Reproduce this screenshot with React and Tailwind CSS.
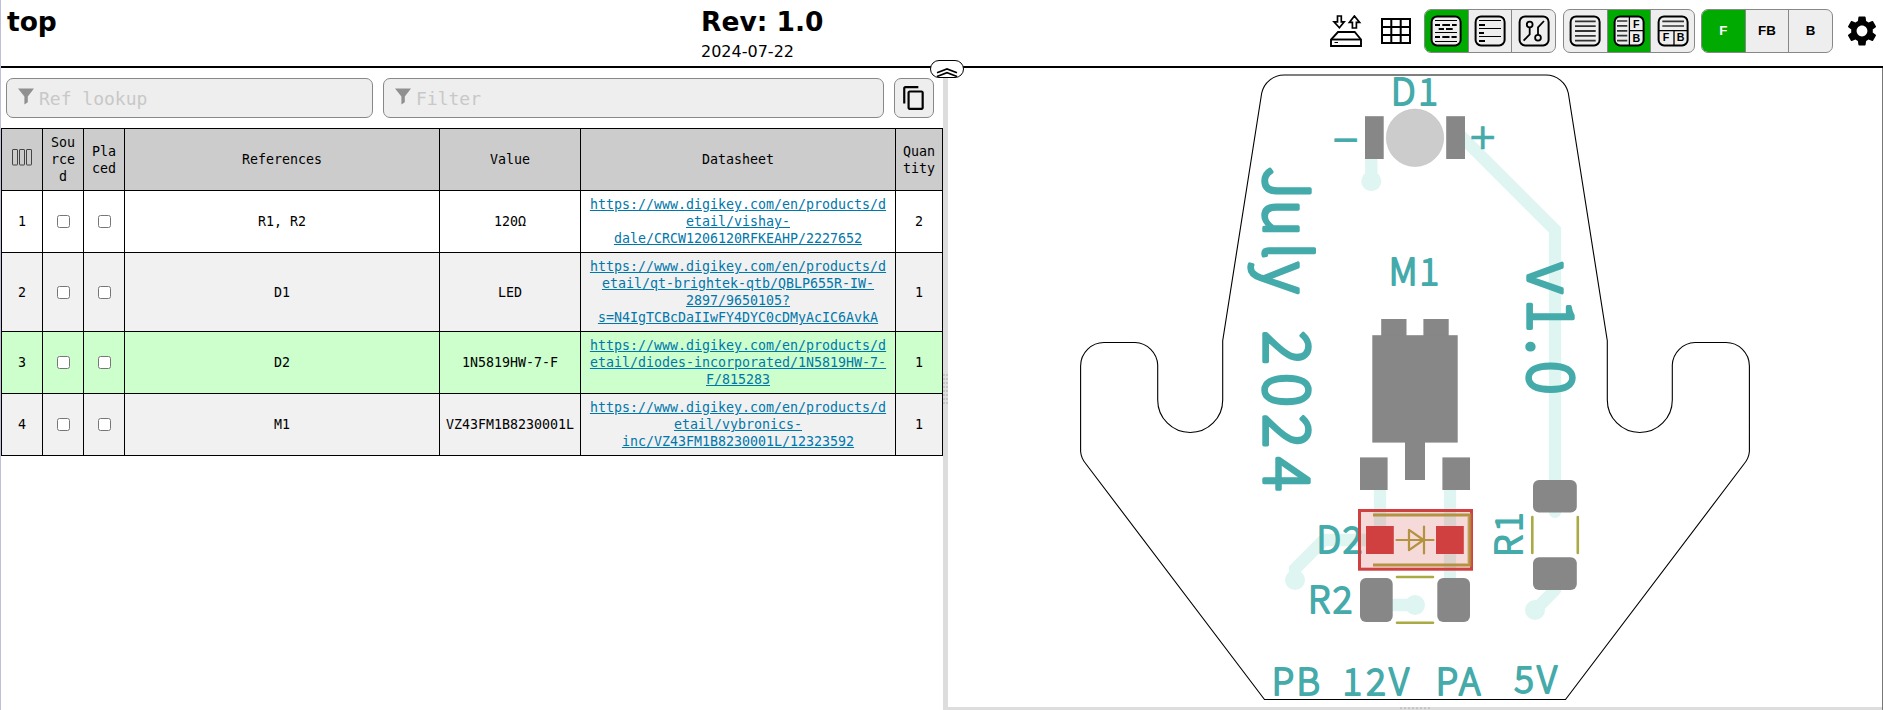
import React from "react";
import { MdSettings, MdOutlineContentCopy } from "react-icons/md";

const rows = [
  { n: 1, refs: "R1, R2", value: "120Ω", qty: 2, bg: "bg-white", link: ["https://www.digikey.com/en/products/d", "etail/vishay-", "dale/CRCW1206120RFKEAHP/2227652"] },
  { n: 2, refs: "D1", value: "LED", qty: 1, bg: "bg-[#f1f1f1]", link: ["https://www.digikey.com/en/products/d", "etail/qt-brightek-qtb/QBLP655R-IW-", "2897/9650105?", "s=N4IgTCBcDaIIwFY4DYC0cDMyAcIC6AvkA"] },
  { n: 3, refs: "D2", value: "1N5819HW-7-F", qty: 1, bg: "bg-[#ccffcc]", link: ["https://www.digikey.com/en/products/d", "etail/diodes-incorporated/1N5819HW-7-", "F/815283"] },
  { n: 4, refs: "M1", value: "VZ43FM1B8230001L", qty: 1, bg: "bg-[#f1f1f1]", link: ["https://www.digikey.com/en/products/d", "etail/vybronics-", "inc/VZ43FM1B8230001L/12323592"] },
];

const Tile = ({ children }) => (
  <svg width="32" height="32" viewBox="0 0 32 32" fill="none" stroke="#000">
    <rect x="1.6" y="1.4" width="29" height="29" rx="5.5" strokeWidth="2" fill="#eee" />
    {children}
  </svg>
);

const letter = { fontFamily: '"Liberation Sans", sans-serif', fontWeight: 700, fontSize: 10.7, textAnchor: "middle", fill: "#000", stroke: "none" };

const LayersIcon = () => (
  <Tile>
    <path d="M5 5.5H27M5 17.5H27M5 26.5H27" strokeWidth="1" />
    <path d="M5 10H10M12.3 10H20M22 10H26.7M8.7 14H14M16 14H22.7M5 22H10M12.3 22H19.5M21.5 22H26.7" strokeWidth="1.8" />
  </Tile>
);
const GroupIcon = () => (
  <Tile>
    <path d="M5 5.5H27M5 13.5H27M5 21.5H27" strokeWidth="1" />
    <path d="M5 10H11M5 18H10M5 26H11" strokeWidth="1.8" />
  </Tile>
);
const NetIcon = () => (
  <Tile>
    <g strokeWidth="1.8">
      <circle cx="11.7" cy="9.5" r="2.9" />
      <path d="M11.7 12.4V19.3L5.6 25.6" />
      <circle cx="20" cy="22.7" r="2.9" />
      <path d="M20 19.8V12.3L26 6" />
    </g>
  </Tile>
);
const ListIcon = () => (
  <Tile>
    <path d="M6 6.4H26.7M6 11.2H26.7M6 16H26.7M6 20.8H26.7M6 25.6H26.7" stroke="#333" strokeWidth="1.8" />
  </Tile>
);
const LeftRightIcon = () => (
  <Tile>
    <path d="M4 6H14.3M4 10.9H14.3M4 15.8H14.3M4 20.7H14.3M4 25.6H14.3" stroke="#333" strokeWidth="1.7" />
    <path d="M16.4 1.5V30.5M16.4 15.7H30.5" strokeWidth="1.3" />
    <text x="23.3" y="12.6" {...letter}>F</text>
    <text x="23.3" y="26.7" {...letter}>B</text>
  </Tile>
);
const TopBottomIcon = () => (
  <Tile>
    <path d="M5.3 6.3H27M5.3 11H27" stroke="#333" strokeWidth="1.7" />
    <path d="M1.5 15.6H30.5M17 15.6V30.5" strokeWidth="1.3" />
    <text x="9" y="26.4" {...letter}>F</text>
    <text x="23.6" y="26.4" {...letter}>B</text>
  </Tile>
);

function ButtonGroup({ items }) {
  return (
    <div className="flex h-[44px] w-[132px] overflow-hidden rounded-[7px] border border-[#888] bg-[#eee]">
      {items.map((it, i) => (
        <button
          key={i}
          className={
            "flex h-full flex-1 items-center justify-center font-['Liberation_Sans',sans-serif] text-[13.33px] font-bold " +
            (i > 0 ? "border-l border-[#888] " : "") +
            (it.on ? "bg-[#00aa00] text-white" : "text-black")
          }
        >
          {it.body}
        </button>
      ))}
    </div>
  );
}

const SaveIcon = () => (
  <svg width="32" height="32" viewBox="0 0 32 32" fill="none" stroke="#000" strokeWidth="1.9">
    <path d="M7.5 1H11.3V6.8H14.2L9.4 12.8L4 6.8H7.5Z" strokeWidth="1.7" />
    <path d="M22.4 13V7.4H19.4L24.4 1L29.6 7.4H26.4V13Z" strokeWidth="1.7" />
    <path d="M8 17H24.7L31 24.5V31H1V24.5Z" />
    <path d="M1 24.5H31" />
    <path d="M4.5 27.5H8" strokeWidth="1" />
  </svg>
);

const GridIcon = () => (
  <svg width="30" height="26" viewBox="0 0 30 26" fill="none" stroke="#000" strokeWidth="2">
    <path d="M1 1H29V25H1ZM1 9H29M1 17H29M10.3 1V25M19.7 1V25" />
  </svg>
);

function Search({ placeholder, width }) {
  return (
    <label className={"flex h-10 items-center rounded-[7px] border border-[#888] bg-[#eee] pl-[11px] " + width}>
      <svg width="16" height="17" viewBox="0 0 16 17" className="mb-[3px] shrink-0">
        <path d="M0 .5H16L9.8 8.6V14.2L6.4 16.5V8.6Z" fill="#909090" />
      </svg>
      <input
        placeholder={placeholder}
        className="ml-[5px] w-full bg-transparent font-['DejaVu_Sans_Mono',monospace] text-[18px] text-black outline-none placeholder:text-[#c8c8c8]"
      />
    </label>
  );
}

const cell = "border border-black px-[5px] py-[5px] text-center align-middle font-normal";

function BomTable() {
  return (
    <table className="w-[942px] table-fixed border-collapse font-['DejaVu_Sans_Mono',monospace] text-[13.3px] leading-[17px]">
      <colgroup>
        <col className="w-[41px]" />
        <col className="w-[41px]" />
        <col className="w-[41px]" />
        <col className="w-[315px]" />
        <col className="w-[141px]" />
        <col className="w-[315px]" />
        <col className="w-[47px]" />
      </colgroup>
      <thead className="bg-[#cccccc]">
        <tr className="h-[62px]">
          <th className={cell}>
            <svg width="21" height="17" viewBox="0 0 21 17" fill="none" stroke="#444" className="mx-auto -mt-1">
              <rect x=".5" y=".5" width="5" height="15.5" rx=".5" />
              <rect x="7.5" y=".5" width="5" height="15.5" rx=".5" />
              <rect x="14.5" y=".5" width="5" height="15.5" rx=".5" />
            </svg>
          </th>
          <th className={cell}>Sou<br />rce<br />d</th>
          <th className={cell}>Pla<br />ced</th>
          <th className={cell}>References</th>
          <th className={cell}>Value</th>
          <th className={cell}>Datasheet</th>
          <th className={cell}>Quan<br />tity</th>
        </tr>
      </thead>
      <tbody>
        {rows.map((r) => (
          <tr key={r.n} className={r.bg}>
            <td className={cell}>{r.n}</td>
            <td className={cell}><input type="checkbox" className="mx-auto block size-[13px]" /></td>
            <td className={cell}><input type="checkbox" className="mx-auto block size-[13px]" /></td>
            <td className={cell}>{r.refs}</td>
            <td className={cell + " whitespace-nowrap"}>{r.value}</td>
            <td className={cell + " whitespace-nowrap"}>
              <a href="#" className="text-[#0077aa] underline">
                {r.link.map((l, i) => (
                  <React.Fragment key={i}>{i > 0 && <br />}{l}</React.Fragment>
                ))}
              </a>
            </td>
            <td className={cell}>{r.qty}</td>
          </tr>
        ))}
      </tbody>
    </table>
  );
}

const silk = { fontFamily: '"Noto Sans CJK JP", "DejaVu Sans", sans-serif', fontWeight: 300, textAnchor: "middle", fill: "#44aaaa", stroke: "#44aaaa", strokeWidth: 1.9, strokeLinejoin: "round" };

const OUTLINE =
  "M1284 75H1546A23 23 0 0 1 1568.3 93L1607.3 340.7V400A32.5 32.5 0 0 0 1672.3 400V365A23.5 23.5 0 0 1 1695 342.5H1725A23.5 23.5 0 0 1 1749.4 366V451.5A22 22 0 0 1 1744 464L1565.5 699.5H1264.5L1086 464A22 22 0 0 1 1080.6 451.5V366A23.5 23.5 0 0 1 1105 342.5H1135A23.5 23.5 0 0 1 1157.7 365V400A32.5 32.5 0 0 0 1222.7 400V340.7L1261.7 93A23 23 0 0 1 1284 75Z";

function Board() {
  return (
    <svg width="933" height="639" viewBox="948 68 933 639" className="block overflow-visible">
      <g fill="none" stroke="#def5f1" strokeWidth="12.3" strokeLinecap="round">
        <path d="M1371.3 150V181M1456 131L1555 230V512M1555 590L1535 610M1380 480V540H1324L1295 569V580M1450 480V600M1380 605H1415" />
      </g>
      <g fill="#def5f1">
        <circle cx="1371.3" cy="181.3" r="10" />
        <circle cx="1535" cy="610" r="10" />
        <circle cx="1295" cy="580" r="10" />
        <circle cx="1415" cy="605" r="10" />
      </g>
      <path d={OUTLINE} fill="none" stroke="#000" strokeWidth="1.1" />
      <g fill="#878787">
        <rect x="1365" y="116.2" width="18.7" height="42.8" />
        <rect x="1446.2" y="116.2" width="18.8" height="42.8" />
        <rect x="1381.2" y="319" width="25.3" height="17" />
        <rect x="1423.4" y="319" width="25.3" height="17" />
        <rect x="1372.3" y="335.2" width="85.4" height="107.4" />
        <rect x="1405" y="442" width="20" height="38" />
        <rect x="1360" y="457.4" width="27.6" height="32.6" />
        <rect x="1442.4" y="457.4" width="27.6" height="32.6" />
        <rect x="1360" y="578" width="32.7" height="44" rx="6" />
        <rect x="1437.3" y="578" width="32.7" height="44" rx="6" />
        <rect x="1533" y="480" width="43.8" height="32.6" rx="6" />
        <rect x="1533" y="557.3" width="43.8" height="32.7" rx="6" />
      </g>
      <circle cx="1415" cy="137.8" r="28.7" fill="#ccc" stroke="#bbb" strokeWidth=".5" />
      <g stroke="#aaaa44" strokeWidth="2.6" strokeLinecap="round">
        <path d="M1397 577H1433M1397 622.8H1433M1532.3 517V553M1577.8 517V553" />
      </g>
      <g {...silk} fontSize="36.5">
        <text x="1403.3 1428" y="104.9">D1</text>
        <text x="1403 1429.3" y="285">M1</text>
        <text x="1328.7 1352.4" y="552.7">D2</text>
        <text x="1319 1342.5" y="612.7">R2</text>
        <text x="1283 1308.3 1330 1352.3 1376 1399 1422 1447 1469.7" y="695.2">PB 12V PA</text>
        <text x="1524 1547" y="692.7">5V</text>
        <text x="-546 -522.3" y="0" transform="translate(1521.8 0) rotate(-90)">R1</text>
      </g>
      <g {...silk} fontSize="35" fontFamily={'"DejaVu Sans", sans-serif'} fontWeight="400" strokeWidth="0.7">
        <text x="1345.3" y="150.8">−</text>
        <text x="1482.7" y="148.8">+</text>
      </g>
      <g {...silk} fontSize="63.5" strokeWidth="3.4">
        <text x="183 218.3 251 277.7 312 347.7 390 431 474.3" y="0" transform="translate(1264.2 0) rotate(90)">July 2024</text>
        <text x="278 315.5 346.7 377.7" y="0" transform="translate(1527.7 0) rotate(90)">v1.0</text>
      </g>
      <rect x="1359.5" y="510.5" width="112" height="58.7" fill="#d04040" fillOpacity=".2" stroke="#d04040" strokeWidth="3" />
      <g fill="none" stroke="#b39240">
        <path d="M1373 515H1469.5V565H1373" strokeWidth="4.2" strokeOpacity=".5" />
        <path d="M1373 515H1469.5V565H1373" strokeWidth="2.2" />
        <path d="M1396.5 540H1433.5M1409 529.8V550.2L1423.5 540ZM1424 526.5V553.5" strokeWidth="2.2" strokeLinecap="round" strokeLinejoin="round" />
      </g>
      <g fill="#d04040">
        <rect x="1366" y="526" width="27.8" height="28" />
        <rect x="1436" y="526" width="27.8" height="28" />
      </g>
    </svg>
  );
}

export default function App() {
  return (
    <div className="relative flex h-[710px] w-full flex-col overflow-hidden border-l border-[#bfbfdc] bg-white text-black">
      <header className="flex h-[68px] shrink-0 border-b-2 border-black font-['DejaVu_Sans',sans-serif]">
        <div className="w-[700px] pt-1.5 pl-1.5 text-[26.5px] leading-8 font-bold">top</div>
        <div className="pt-1.5">
          <div className="text-[26.5px] leading-8 font-bold">Rev: 1.0</div>
          <div className="mt-[4px] text-[16px] leading-5">2024-07-22</div>
        </div>
        <div className="mt-[9px] ml-auto flex h-[44px] items-center self-start pr-[3px]">
          <SaveIcon />
          <div className="mr-[13px] ml-[19px]"><GridIcon /></div>
          <ButtonGroup items={[{ on: true, body: <LayersIcon /> }, { body: <GroupIcon /> }, { body: <NetIcon /> }]} />
          <div className="mr-1.5 ml-[7px]">
            <ButtonGroup items={[{ body: <ListIcon /> }, { on: true, body: <LeftRightIcon /> }, { body: <TopBottomIcon /> }]} />
          </div>
          <ButtonGroup items={[{ on: true, body: "F" }, { body: "FB" }, { body: "B" }]} />
          <MdSettings size={36} className="ml-[11px]" />
        </div>
      </header>

      <main className="flex min-h-0 flex-1">
        <section className="w-[942px] shrink-0">
          <div className="flex gap-2.5 py-2.5 pl-[5px]">
            <Search placeholder="Ref lookup" width="w-[367px]" />
            <Search placeholder="Filter" width="w-[501px]" />
            <button className="flex size-10 items-center justify-center rounded-[7px] border border-[#888] bg-[#eee]">
              <MdOutlineContentCopy size={26} />
            </button>
          </div>
          <BomTable />
        </section>
        <div className="flex w-[5px] shrink-0 items-center bg-[#dddddd]">
          <svg width="5" height="30" viewBox="0 0 5 30" stroke="#c4c4c4" strokeWidth="2" strokeDasharray="2 2">
            <path d="M1 0V30M4 0V30" />
          </svg>
        </div>
        <section className="flex min-w-0 flex-1 flex-col border-r border-[#777]">
          <div className="min-h-0 flex-1"><Board /></div>
          <div className="flex h-[3px] shrink-0 justify-center bg-[#dddddd]">
            <svg width="30" height="3" viewBox="0 0 30 3" stroke="#c4c4c4" strokeWidth="2" strokeDasharray="2 2">
              <path d="M0 1.2H30" />
            </svg>
          </div>
        </section>
      </main>

      <button className="absolute top-[60px] left-[929px] flex h-[18px] w-[34px] items-end justify-center rounded-[9px] border border-black bg-white">
        <svg width="22" height="9" viewBox="0 0 22 9" fill="none" stroke="#000" strokeWidth="1.6">
          <path d="M1 4.7L11 .9L21 4.7M1 8.5L11 4.7L21 8.5" />
        </svg>
      </button>
    </div>
  );
}
